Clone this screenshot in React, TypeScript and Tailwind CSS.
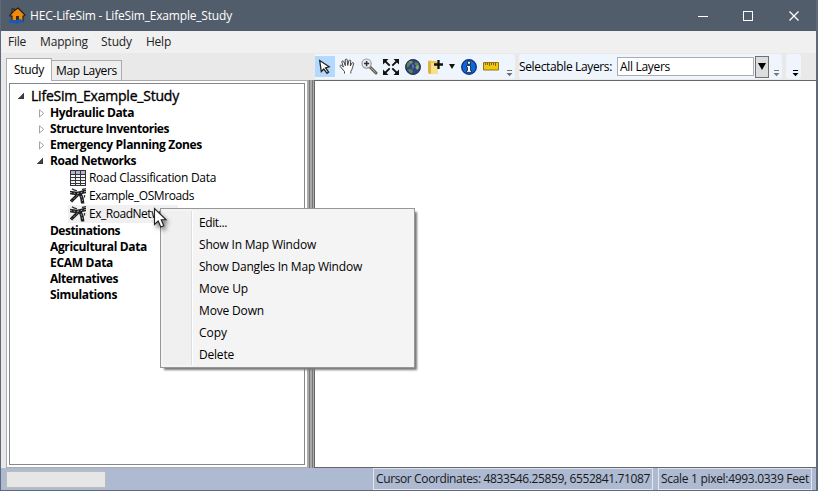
import { useLayoutEffect, useRef, useState } from "react";
import type { ReactNode } from "react";

/* One line of text whose letter spacing is adjusted to fill `width` pixels. */
function Label({ text, width, className = "" }: { text: string; width: number; className?: string }) {
  const ref = useRef<HTMLSpanElement>(null);
  const [spacing, setSpacing] = useState(0);
  useLayoutEffect(() => {
    if (!ref.current) return;
    const natural = ref.current.getBoundingClientRect().width;
    setSpacing((width - natural) / text.length);
  }, [text, width]);
  return (
    <span ref={ref} className={`inline-block shrink-0 whitespace-nowrap ${className}`} style={{ letterSpacing: spacing }}>
      {text}
    </span>
  );
}

function HouseIcon() {
  return (
    <svg width="17" height="17" viewBox="0 0 17 17" className="shrink-0">
      <path d="M3 2h2v2l4-3 7 7-1 1h-1v5H3V9H1V8l3-3H3z" fill="#ef8a0c" stroke="#1c1a16" strokeWidth="1.1" />
      <path d="M7 9h3v5H7z" fill="#3b2a14" />
      <path d="M0 13c3-2 4 1 7 0 4-1 5-1 8 1v2c-3-1-5 0-7 1-3-2-5 0-8-2z" fill="#1b57b5" />
    </svg>
  );
}

function TitleBar() {
  return (
    <header className="flex h-[31px] shrink-0 items-center bg-[#525d6b] pl-[8px] text-white">
      <HouseIcon />
      <Label text="HEC-LifeSim - LifeSim_Example_Study" width={202} className="ml-[4px]" />
      <svg width="112" height="20" viewBox="0 0 112 20" className="ml-auto mr-[8px]" fill="none" stroke="#fff">
        <path d="M2 10.5h10M47.5 5.500h9v9h-9z" shapeRendering="crispEdges" />
        <path d="M93.500 5.500l9 9m0-9l-9 9" strokeWidth="1.300" />
      </svg>
    </header>
  );
}

function MenuBar() {
  return (
    <nav className="flex h-[22px] shrink-0 items-center bg-[#f0f0f0] pb-px pl-[7px] text-[#222]">
      <Label text="File" width={18} className="mr-[14px]" />
      <Label text="Mapping" width={48} className="mr-[13px]" />
      <Label text="Study" width={31} className="mr-[14px]" />
      <Label text="Help" width={25} />
    </nav>
  );
}

function ArrowTool() {
  return (
    <svg width="20" height="20" viewBox="0 0 20 20">
      <path d="M4.700 3.500l1.600 11 2.500-2.500 3.200 4.300 1.600-1.200-3-4.200 3.600-1.100z" fill="#fff" stroke="#222" strokeWidth="1.300" />
    </svg>
  );
}

function HandTool() {
  return (
    <svg width="17" height="17" viewBox="0 0 17 17">
      <path
        d="M5.500 15.500v-2L1.300 8.600c-.8-1.200.8-2 1.800-.9l1.300 1.400L2.900 4c-.2-1.400 1.500-1.500 1.900-.3l1.500 4L6.200 2c.1-1.300 1.900-1.300 2 0l.5 5.400L9.900 2.700c.4-1.200 2-.8 1.800.4L11.300 8l1.700-3c.7-1 2-.3 1.600.8-.8 2.300-1 5-2.800 7.600v2.100"
        fill="#fff"
        stroke="#444"
        strokeWidth="1"
      />
    </svg>
  );
}

function ZoomTool() {
  return (
    <svg width="17" height="17" viewBox="0 0 17 17">
      <path d="M9 9l6 6" stroke="#655c51" strokeWidth="3" strokeLinecap="round" />
      <path d="M9.500 9.500l5.200 5.200" stroke="#b4a893" strokeWidth="1" />
      <circle cx="5.600" cy="5.600" r="4.600" fill="#e8eef4" stroke="#92938f" strokeWidth="1.100" />
      <path d="M5.600 3v5.200M3 5.600h5.200" stroke="#333" strokeWidth="1.500" />
    </svg>
  );
}

function ExtentTool() {
  return (
    <svg width="16" height="16" viewBox="0 0 16 16">
      <path d="M2 2l4.700 4.700M14 2L9.300 6.700M2 14l4.700-4.700M14 14L9.300 9.300" stroke="#111" strokeWidth="1.800" />
      <path d="M0 0h5.500L0 5.500zM10.500 0H16v5.500zM0 10.500V16h5.500zM16 10.500V16h-5.500z" fill="#111" />
    </svg>
  );
}

function GlobeTool() {
  return (
    <svg width="16" height="16" viewBox="0 0 16 16">
      <circle cx="8" cy="8" r="7.700" fill="#34437c" />
      <path d="M2 4l3-2 3 .5-1 2-2 1-1 2-2 1zM4 10l3 .5 1 2.500-2 1.500-3-3zM10.500 3l2.500 1 1.500 4-2 2-2-1 .5-2.500-1.500-1.500z" fill="#55884b" />
      <path d="M4 3l2-1 1.500 1L6 4zM10.500 8l2.500-2 1 3-2 2z" fill="#86ab76" />
      <path d="M7 5l2 1v3l-2 1z" fill="#5b6db0" />
      <circle cx="8" cy="8" r="7.400" fill="none" stroke="#292d51" />
    </svg>
  );
}

function AddLayerTool() {
  return (
    <svg width="16" height="16" viewBox="0 0 16 16">
      <path d="M1 2l3-1v1h5l2 2v11H2l-1-1z" fill="#eac750" />
      <path d="M4 4h5l2 2v9H4z" fill="#f5e08c" />
      <path d="M1 2l3 2v11l-3-2z" fill="#dcb343" />
      <path d="M11.500 1v9M7 5.500h9" stroke="#111" strokeWidth="2.300" />
    </svg>
  );
}

function InfoTool() {
  return (
    <svg width="16" height="16" viewBox="0 0 16 16">
      <circle cx="8" cy="8" r="7.300" fill="#1266d2" stroke="#082f80" strokeWidth="1.300" />
      <path d="M6.500 2.300h3v2.800h-3zM5.500 6.500h4v5h1v1.800h-5v-1.800h1V8.200h-1z" fill="#fff" stroke="#061c40" strokeWidth=".8" />
    </svg>
  );
}

function RulerTool() {
  return (
    <svg width="16" height="9" viewBox="0 0 16 9">
      <path d="M.5.500h15v7.500H.5z" fill="#efc70d" stroke="#967414" />
      <path d="M2.500 1v2m2-2v2m2-2v3m2-3v2m2-2v2m2-2v3" stroke="#715711" strokeWidth=".9" />
    </svg>
  );
}

function Overflow({ color }: { color: string }) {
  return (
    <svg width="7" height="7" viewBox="0 0 7 7" fill={color} className="mb-[2px] shrink-0 self-end">
      <path d="M1 0h5v1H1zM.5 3h6L3.500 6.300z" />
    </svg>
  );
}

function ToolBarTray() {
  return (
    <div className="flex h-[27px] shrink-0 items-start bg-[#e9e9e9] pl-px pt-px">
      <div className="flex h-[25px] w-[200px] items-center rounded-r-[3px] bg-[#eef5fd]">
        <span className="flex h-[21px] w-[20px] shrink-0 items-center justify-center bg-[#b3d9ff]"><ArrowTool /></span>
        <div className="ml-[4px] flex items-center gap-[5px]">
          <HandTool />
          <ZoomTool />
          <ExtentTool />
        </div>
        <div className="ml-[6px] flex items-center gap-[6px]">
          <GlobeTool />
          <AddLayerTool />
          <svg width="6" height="5" viewBox="0 0 6 5"><path d="M0 0h6L3 5z" fill="#111" /></svg>
          <InfoTool />
          <RulerTool />
        </div>
        <span className="ml-auto mr-[2px] flex self-stretch"><Overflow color="#6e6e6e" /></span>
      </div>
      <div className="ml-[4px] flex h-[25px] w-[263px] items-center rounded-[3px] bg-[#eef5fd]">
        <Label text="Selectable Layers:" width={93} />
        <div className="ml-[5px] flex h-[19px] w-[137px] shrink-0 items-center border border-[#abadb3] bg-white pl-[2px]">
          <Label text="All Layers" width={50} />
        </div>
        <div className="ml-px flex h-[22px] w-[14px] shrink-0 items-center justify-center border border-[#707070] bg-[#dddddd]">
          <svg width="8" height="7" viewBox="0 0 8 7"><path d="M0 0h8L4 7z" fill="#000" /></svg>
        </div>
        <span className="ml-auto mr-[2px] flex self-stretch"><Overflow color="#777" /></span>
      </div>
      <div className="ml-[4px] flex h-[25px] w-[15px] justify-end rounded-[3px] bg-[#eef5fd] pr-[2px]">
        <Overflow color="#000" />
      </div>
    </div>
  );
}

function Open() {
  return <svg width="6" height="6" viewBox="0 0 6 6" className="shrink-0"><path d="M6 0v6H0z" fill="#404040" stroke="#222" strokeWidth=".5" /></svg>;
}

function Closed() {
  return <svg width="6" height="9" viewBox="0 0 6 9" className="shrink-0"><path d="M.5.800v7.200l4.200-3.600z" fill="#fff" stroke="#999" strokeWidth=".9" /></svg>;
}

function TableIcon() {
  return (
    <svg width="16" height="16" viewBox="0 0 16 16" className="shrink-0" shapeRendering="crispEdges">
      <path d="M0 0h16v16H0z" fill="#f3f3f6" />
      <path d="M1 1h14v3H1z" fill="#b4b2d0" />
      <path d="M0 .5h16M0 4.500h16M0 7.500h16M0 10.500h16M0 13.500h16M0 15.500h16M.5 0v16M5.500 0v16M10.500 0v16M15.500 0v16" stroke="#343438" />
    </svg>
  );
}

function RoadIcon() {
  return (
    <svg width="17" height="16" viewBox="0 0 17 16" className="shrink-0">
      <path d="M0 4.500c3 .2 5 1.300 8 .8 3-.3 5-1.800 8-1.800" stroke="#1d1d1d" strokeWidth="3.400" fill="none" />
      <path d="M8.500 5.500C7 8 4 10 1 13.500" stroke="#1d1d1d" strokeWidth="3.200" fill="none" />
      <path d="M10 5.500c1.500 2.500 2.500 5 2.700 10" stroke="#1d1d1d" strokeWidth="3.400" fill="none" />
      <path d="M2 .8c1.500 1.500 3 1.700 5 2M12 1.500l4-.8M14.500 7v2.500" stroke="#333" strokeWidth="1.300" fill="none" />
      <path d="M0 4.500c3 .2 5 1.300 8 .8 3-.3 5-1.800 8-1.800M7.500 7L2 12.500M11 8c1 2 1.500 4 1.700 7" stroke="#d8d8d8" strokeWidth=".7" strokeDasharray="1.800 1.800" fill="none" />
    </svg>
  );
}

function Branch({ text, width, state }: { text: string; width: number; state?: "open" | "closed" }) {
  return (
    <li className="flex h-[16px] items-center">
      <span className="flex w-[40px] shrink-0 pl-[27px]">
        {state === "open" && <Open />}
        {state === "closed" && <span className="pl-[2px]"><Closed /></span>}
      </span>
      <Label text={text} width={width} className="font-bold" />
    </li>
  );
}

function Leaf({ icon, text, width, selected = false }: { icon: ReactNode; text: string; width: number; selected?: boolean }) {
  return (
    <li className={`ml-[58px] flex h-[18px] items-center pl-[2px] ${selected ? "w-[110px] bg-[#f0f0f0]" : ""}`}>
      <span className="w-[19px] shrink-0">{icon}</span>
      <Label text={text} width={width} />
    </li>
  );
}

function StudyPanel() {
  return (
    <section className="flex w-[306px] shrink-0 flex-col pl-[5px] pt-[5px]">
      <div className="flex h-[22px] shrink-0 items-end">
        <div className="relative z-10 -mb-px flex h-[23px] w-[46px] items-center border border-b-0 border-[#acacac] bg-white pl-[7px]">
          <Label text="Study" width={30} />
        </div>
        <div className="flex h-[20px] w-[70px] items-center border border-b-0 border-l-0 border-[#acacac] bg-[#eeeeee] pl-[4px]">
          <Label text="Map Layers" width={61} />
        </div>
      </div>
      <div className="flex h-[388px] flex-col border border-r-0 border-[#acacac] bg-white p-[2px]">
        <ul className="h-full border border-[#828790] pt-[3px]">
          <li className="flex h-[18px] items-center pb-px pl-[8px]">
            <Open />
            <Label text="LifeSim_Example_Study" width={148} className="ml-[7px] text-[14px] [-webkit-text-stroke:0.35px_black]" />
          </li>
          <Branch text="Hydraulic Data" width={84} state="closed" />
          <Branch text="Structure Inventories" width={119} state="closed" />
          <Branch text="Emergency Planning Zones" width={152} state="closed" />
          <Branch text="Road Networks" width={86} state="open" />
          <Leaf icon={<TableIcon />} text="Road Classification Data" width={127} />
          <Leaf icon={<RoadIcon />} text="Example_OSMroads" width={105} />
          <Leaf icon={<RoadIcon />} text="Ex_RoadNetwork" width={88} selected />
          <Branch text="Destinations" width={70} />
          <Branch text="Agricultural Data" width={97} />
          <Branch text="ECAM Data" width={63} />
          <Branch text="Alternatives" width={68} />
          <Branch text="Simulations" width={67} />
        </ul>
      </div>
    </section>
  );
}

function ContextMenu() {
  const items: [string, number][] = [
    ["Edit...", 28],
    ["Show In Map Window", 117],
    ["Show Dangles In Map Window", 163],
    ["Move Up", 49],
    ["Move Down", 65],
    ["Copy", 28],
    ["Delete", 35],
  ];
  return (
    <div className="absolute left-[159px] top-[208px] flex h-[160px] w-[255px] border border-[#979797] bg-[#f4f4f4] p-[2px] shadow-[3px_3px_2px_-1px_#777777]">
      <div className="w-[29px] border-r border-[#dedede] bg-[#f0f0f0]" />
      <ul className="border-l border-white pl-[6px] pt-px">
        {items.map(([text, width]) => (
          <li key={text} className="flex h-[22px] items-center"><Label text={text} width={width} /></li>
        ))}
      </ul>
    </div>
  );
}

function Pointer() {
  return (
    <svg width="22" height="28" viewBox="0 0 22 28" className="absolute left-[151px] top-[207px] drop-shadow-[2px_3px_2px_#00000080]">
      <path d="M2.500 1.500v16l3.700-3.500 2.600 6 3-1.300-2.600-5.900h4.900z" fill="#fff" stroke="#222" strokeWidth="1.100" />
    </svg>
  );
}

function StatusBar() {
  return (
    <footer className="flex h-[22px] shrink-0 items-center bg-[#adbad1] text-[#181818]">
      <div className="ml-[5px] h-[17px] w-[100px] border border-[#bcbcbc] bg-[#e6e6e6]" />
      <div className="ml-auto flex h-[22px] w-[280px] items-center border border-[#e2e7ef] pl-[2px]">
        <Label text="Cursor Coordinates: 4833546.25859, 6552841.71087" width={274} />
      </div>
      <div className="ml-[5px] mr-[4px] flex h-[22px] w-[154px] items-center border border-[#e2e7ef] pl-[2px]">
        <Label text="Scale 1 pixel:4993.0339 Feet" width={148} />
      </div>
    </footer>
  );
}

export default function App() {
  return (
    <main className="relative flex h-[491px] w-[818px] flex-col overflow-hidden border border-r-2 border-t-0 border-[#5f6977] bg-[#e9e9e9] font-['Open_Sans','Noto_Sans',sans-serif] text-[12px] leading-[16px] text-black">
      <TitleBar />
      <MenuBar />
      <div className="flex h-[415px] shrink-0">
        <StudyPanel />
        <div className="mt-[27px] flex w-[7px] shrink-0 justify-end gap-[2px] bg-[#aaaaaa] pr-px">
          <div className="w-px bg-[#777777]" />
          <div className="w-px bg-[#777777]" />
        </div>
        <section className="flex flex-1 flex-col">
          <ToolBarTray />
          <div className="flex-1 border border-r-0 border-[#666666] bg-white" />
        </section>
      </div>
      <StatusBar />
      <ContextMenu />
      <Pointer />
    </main>
  );
}
